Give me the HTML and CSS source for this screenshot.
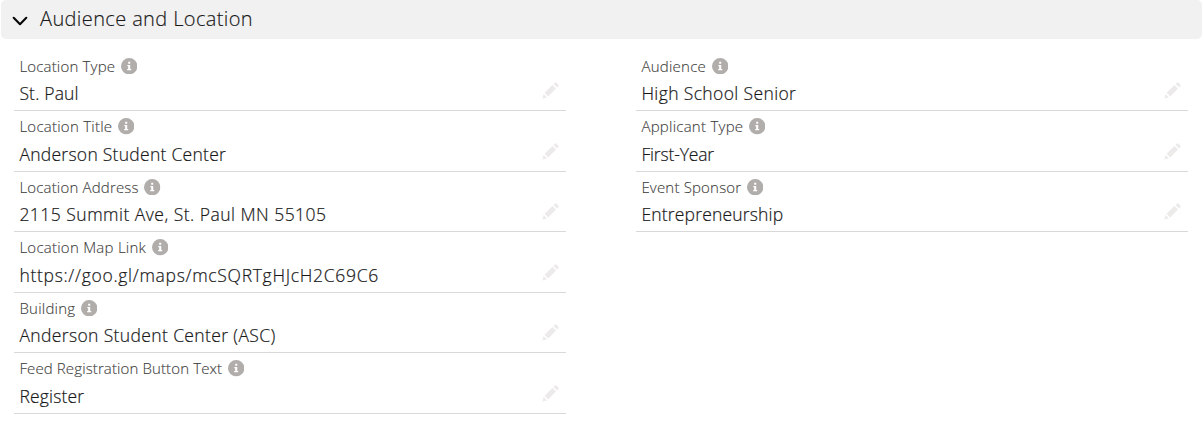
FILE: index.html
```html
<!DOCTYPE html>
<html lang="en">
<head>
<meta charset="utf-8">
<title>Audience and Location</title>
<link rel="stylesheet" href="styles.css">
</head>
<body>
<svg class="symbols" aria-hidden="true">
  <symbol id="info" viewBox="0 0 16 16"><circle cx="8" cy="8" r="8" fill="#b0adab"/><path d="M7 3.7h2v2H7zM6.2 6.8H9v3.9h1v1.3H6v-1.3h1V8.1h-.8z" fill="#fff"/></symbol>
  <symbol id="pencil" viewBox="0 0 17 17"><path d="M.4 16.6 1.6 12 5 15.4zM2.6 10.8 10.4 3l3.6 3.6-7.8 7.8zM11.5 1.9l1-1a1.6 1.6 0 0 1 2.3 0l1.3 1.3a1.6 1.6 0 0 1 0 2.3l-1 1z" fill="#ecebea"/></symbol>
</svg>
<section class="section">
  <h3 class="heading">
    <svg class="chevron" viewBox="0 0 16 10"><path d="M1.7 1.8 8 8.2l6.3-6.4" fill="none" stroke="#080707" stroke-width="2.1" stroke-linecap="round" stroke-linejoin="round"/></svg>
    <span class="title">Audience and Location</span>
  </h3>
  <div class="columns">
    <div class="column">
      <div class="field"><div class="label">Location Type<svg class="info"><use href="#info"/></svg></div><div class="value">St. Paul</div><svg class="edit"><use href="#pencil"/></svg></div>
      <div class="field"><div class="label spaced">Location Title<svg class="info"><use href="#info"/></svg></div><div class="value wide">Anderson Student Center</div><svg class="edit"><use href="#pencil"/></svg></div>
      <div class="field"><div class="label">Location Address<svg class="info"><use href="#info"/></svg></div><div class="value address">2115 Summit Ave, St. Paul MN 55105</div><svg class="edit"><use href="#pencil"/></svg></div>
      <div class="field"><div class="label spaced">Location Map Link<svg class="info"><use href="#info"/></svg></div><div class="value url">https://goo.gl/maps/mcSQRTgHJcH2C69C6</div><svg class="edit"><use href="#pencil"/></svg></div>
      <div class="field"><div class="label spaced">Building<svg class="info"><use href="#info"/></svg></div><div class="value wider">Anderson Student Center (ASC)</div><svg class="edit"><use href="#pencil"/></svg></div>
      <div class="field"><div class="label long">Feed Registration Button Text<svg class="info"><use href="#info"/></svg></div><div class="value">Register</div><svg class="edit"><use href="#pencil"/></svg></div>
    </div>
    <div class="column">
      <div class="field"><div class="label spaced">Audience<svg class="info"><use href="#info"/></svg></div><div class="value wider">High School Senior</div><svg class="edit"><use href="#pencil"/></svg></div>
      <div class="field"><div class="label spaced">Applicant Type<svg class="info"><use href="#info"/></svg></div><div class="value tight">First-Year</div><svg class="edit"><use href="#pencil"/></svg></div>
      <div class="field"><div class="label">Event Sponsor<svg class="info"><use href="#info"/></svg></div><div class="value">Entrepreneurship</div><svg class="edit"><use href="#pencil"/></svg></div>
    </div>
  </div>
</section>
</body>
</html>
```

FILE: styles.css
```css
body { margin: 0; background: #fff; color: #181818; font-family: "Open Sans", "Noto Sans", sans-serif; font-weight: 300; overflow: hidden; }
.symbols { display: none; }
.section { padding-left: 1px; }
.heading { margin: 0; height: 39px; display: flex; align-items: center; border-radius: 5px; background: #f1f1f1; font-size: 20px; font-weight: 300; }
.chevron { width: 16px; height: 10px; margin: 2px 12px 0 11px; }
.title { margin-top: -2px; letter-spacing: .38px; -webkit-text-stroke: .15px #181818; }
.columns { display: grid; grid-template-columns: 552px 552px; column-gap: 70px; padding: 11.6px 0 0 13px; }
.field { box-sizing: border-box; height: 60.5px; border-bottom: 1px solid #d9d9d9; display: grid; grid-template: 31.8px 1fr / 1fr 16px; padding: 0 8px 0 5.4px; }
.label { grid-column: 1 / 3; display: flex; align-items: center; color: #3e3e3c; font-size: 15px; letter-spacing: .18px; line-height: 30.6px; height: 31.2px; white-space: nowrap; -webkit-text-stroke: .12px #3e3e3c; }
.spaced { letter-spacing: .25px; }
.long { letter-spacing: .12px; }
.info { width: 16.4px; height: 16.4px; margin-left: 5.7px; }
.value { font-size: 17.5px; line-height: 23px; letter-spacing: .18px; white-space: nowrap; -webkit-text-stroke: .2px #181818; }
.wide { letter-spacing: .27px; }
.wider { letter-spacing: .37px; }
.tight { letter-spacing: -.15px; }
.address { letter-spacing: .48px; }
.url { letter-spacing: .7px; }
.edit { width: 17px; height: 17px; }
```
